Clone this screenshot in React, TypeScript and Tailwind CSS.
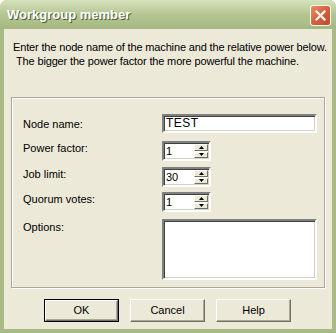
import React from "react";

const sunken =
  "border-2 border-t-[#808080] border-l-[#808080] border-b-white border-r-white bg-white shadow-[inset_1px_1px_0_#404040,inset_-1px_-1px_0_#d4d0c8]";

const Spinner: React.FC<{ value: string }> = ({ value }) => (
  <div className={`${sunken} flex h-[20px] w-[49px] items-stretch`}>
    <div className="flex-1 pl-[2px] pt-[1px] text-[11px] leading-[14px] text-black">{value}</div>
    <div className="flex w-[15px] flex-col gap-[1px] py-[1px] pr-[1px]">
      <SpinButton up />
      <SpinButton />
    </div>
  </div>
);

const SpinButton: React.FC<{ up?: boolean }> = ({ up }) => (
  <div className="flex flex-1 items-center justify-center border border-t-white border-l-white border-b-[#716f64] border-r-[#716f64] bg-[#ece9d8]">
    <svg width="5" height="3" viewBox="0 0 5 3">
      {up ? (
        <path d="M2.5 0 L5 3 L0 3 Z" fill="#000" />
      ) : (
        <path d="M0 0 L5 0 L2.5 3 Z" fill="#000" />
      )}
    </svg>
  </div>
);

const DialogButton: React.FC<{ label: string; isDefault?: boolean }> = ({
  label,
  isDefault,
}) => (
  <div
    className={`h-[23px] w-[75px] ${
      isDefault ? "border border-black" : ""
    }`}
  >
    <div className="flex h-full w-full items-center justify-center border border-t-white border-l-white border-b-[#716f64] border-r-[#716f64] bg-[#ece9d8] text-[11px] text-black shadow-[inset_-1px_-1px_0_#aca899]">
      {label}
    </div>
  </div>
);

export default function App() {
  return (
    <div
      className="h-[333px] w-[336px] bg-white"
      style={{ fontFamily: '"Liberation Sans", Arial, sans-serif' }}
    >
      <div className="flex h-[333px] w-[336px] flex-col overflow-hidden rounded-t-[7px] bg-[#a9bb85]">
        {/* title bar */}
        <div className="relative flex h-[29px] shrink-0 items-center bg-gradient-to-b from-[#d8e2bd] via-[#b4c592] to-[#a5b881] pl-[7px]">
          <span className="text-[13px] font-bold text-white [text-shadow:1px_1px_0_#4f5a35]">
            Workgroup member
          </span>
          <div className="absolute right-[5px] top-[5px] flex h-[21px] w-[21px] items-center justify-center rounded-[3px] border border-white bg-gradient-to-br from-[#e98c64] via-[#d8603a] to-[#c04a26]">
            <svg width="11" height="11" viewBox="0 0 11 11">
              <path
                d="M1.5 1.5 L9.5 9.5 M9.5 1.5 L1.5 9.5"
                stroke="#fff"
                strokeWidth="2.2"
                strokeLinecap="square"
              />
            </svg>
          </div>
        </div>

        {/* body */}
        <div className="mx-[4px] mb-[4px] flex flex-1 flex-col bg-[#ece9d8]">
          <div className="whitespace-nowrap pl-[9px] pt-[11px] text-[11px] leading-[14px] tracking-[-0.15px] text-black">
            <div>Enter the node name of the machine and the relative power below.</div>
            <div className="pl-[3px]">The bigger the power factor the more powerful the machine.</div>
          </div>

          <div className="ml-[7px] mt-[29px] h-[191px] w-[314px] shrink-0 border border-[#aca899] shadow-[inset_1px_1px_0_#fff,1px_1px_0_#fff]">
            <div className="flex flex-col pl-[11px] pt-[16px] text-[11px] leading-[14px] text-black">
              <div className="flex items-center">
                <div className="w-[139px]">Node name:</div>
                <div className={`${sunken} h-[19px] w-[155px] pl-[2px] text-[12px] leading-[15px] tracking-[0.5px]`}>
                  TEST
                </div>
              </div>
              <div className="mt-[8px] flex items-start">
                <div className="w-[139px]">Power factor:</div>
                <Spinner value="1" />
              </div>
              <div className="mt-[6px] flex items-start">
                <div className="w-[139px]">Job limit:</div>
                <Spinner value="30" />
              </div>
              <div className="mt-[5px] flex items-start">
                <div className="w-[139px]">Quorum votes:</div>
                <Spinner value="1" />
              </div>
              <div className="mt-[7px] flex items-start">
                <div className="w-[139px] pt-[1px]">Options:</div>
                <div className={`${sunken} h-[61px] w-[155px]`} />
              </div>
            </div>
          </div>

          <div className="ml-[40px] mt-[11px] flex gap-[11px]">
            <DialogButton label="OK" isDefault />
            <DialogButton label="Cancel" />
            <DialogButton label="Help" />
          </div>
        </div>
      </div>
    </div>
  );
}
